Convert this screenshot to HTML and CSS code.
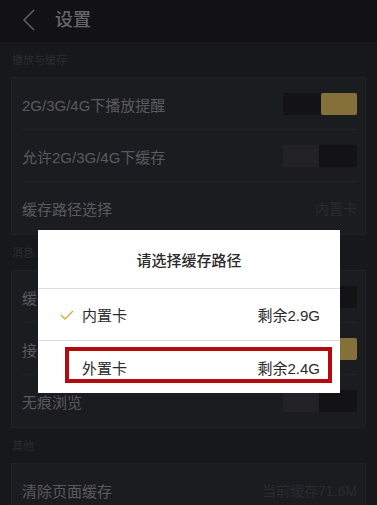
FILE: index.html
```html
<!DOCTYPE html>
<html lang="zh-CN">
<head>
<meta charset="UTF-8">
<meta name="viewport" content="width=device-width, initial-scale=1.0">
<title>设置</title>
<link rel="stylesheet" href="styles.css">
</head>
<body>
  <div class="topbar">
    <svg class="back-icon" viewBox="0 0 14 22" fill="none">
      <polyline points="12,1 2,11 12,21" stroke="#5e5e62" stroke-width="1.6" fill="none"/>
    </svg>
    <span class="topbar-title">设置</span>
  </div>
  <div class="page">
    <div class="section-label">播放与缓存</div>
    <div class="card">
      <div class="row">
        <span class="row-text">2G/3G/4G下播放提醒</span>
        <span class="toggle on"><span class="toggle-off"></span><span class="toggle-knob"></span></span>
      </div>
      <div class="row">
        <span class="row-text">允许2G/3G/4G下缓存</span>
        <span class="toggle off"><span class="toggle-knob"></span><span class="toggle-off"></span></span>
      </div>
      <div class="row">
        <span class="row-text">缓存路径选择</span>
        <span class="row-value">内置卡</span>
      </div>
    </div>
    <div class="section-label">消息</div>
    <div class="card">
      <div class="row">
        <span class="row-text">缓存提醒</span>
        <span class="toggle off"><span class="toggle-knob"></span><span class="toggle-off"></span></span>
      </div>
      <div class="row">
        <span class="row-text">接收推送</span>
        <span class="toggle on"><span class="toggle-off"></span><span class="toggle-knob"></span></span>
      </div>
      <div class="row">
        <span class="row-text">无痕浏览</span>
        <span class="toggle off"><span class="toggle-knob"></span><span class="toggle-off"></span></span>
      </div>
    </div>
    <div class="section-label">其他</div>
    <div class="card">
      <div class="row">
        <span class="row-text">清除页面缓存</span>
        <span class="row-value">当前缓存71.6M</span>
      </div>
    </div>
  </div>

  <!-- path chooser dialog -->
  <div class="dialog">
    <div class="dialog-title">请选择缓存路径</div>
    <div class="dialog-item">
      <svg class="check-icon" viewBox="0 0 14 10" fill="none">
        <polyline points="1,5 5,9 13,1" stroke="#d9a93f" stroke-width="1.4" fill="none"/>
      </svg>
      <span class="item-name">内置卡</span>
      <span class="item-free">剩余2.9G</span>
    </div>
    <div class="dialog-item">
      <span class="item-name">外置卡</span>
      <span class="item-free">剩余2.4G</span>
      <div class="highlight-box"></div>
    </div>
  </div>
</body>
</html>
```

FILE: styles.css
```css
html, body {
  margin: 0;
  padding: 0;
  background: #17181b;
  font-family: 'Liberation Sans', 'Noto Sans CJK SC', sans-serif;
  width: 377px;
  height: 505px;
  overflow: hidden;
  position: relative;
}
.topbar {
  height: 42px;
  background: #121215;
  display: flex;
  align-items: center;
  padding-left: 22px;
  box-sizing: border-box;
}
.back-icon {
  width: 14px;
  height: 22px;
  margin-top: -2px;
}
.topbar-title {
  margin-left: 19px;
  font-size: 18px;
  font-weight: 500;
  color: #66666a;
  margin-top: -6px;
}
.page {
  padding: 0 11px;
}
.section-label {
  height: 35px;
  line-height: 36px;
  font-size: 11px;
  color: #2c2d31;
  padding-left: 1px;
}
.card {
  background: #1b1c20;
  border: 1px solid #202125;
  padding: 0 8px 0 10px;
}
.row {
  height: 52px;
  display: flex;
  align-items: center;
  justify-content: space-between;
  border-bottom: 1px solid #202125;
  box-sizing: border-box;
}
.row:last-child {
  border-bottom: none;
}
.row-text {
  font-size: 15px;
  color: #5a5a5e;
  margin-top: 1px;
}
.row-value {
  font-size: 14px;
  color: #2a2b2f;
}
.toggle {
  width: 74px;
  height: 22px;
  display: flex;
}
.toggle-off {
  flex: 1;
  background: #131316;
}
.toggle-knob {
  width: 36px;
  border-radius: 2px;
}
.toggle.on .toggle-knob {
  background: #86703a;
}
.toggle.off .toggle-knob {
  background: #222226;
}
.dialog {
  position: absolute;
  top: 230px;
  left: 38px;
  width: 302px;
  background: #ffffff;
}
.dialog-title {
  height: 59px;
  display: flex;
  align-items: center;
  justify-content: center;
  font-size: 15px;
  font-weight: 500;
  color: #2a2a2a;
  border-bottom: 1px solid #dcdcdc;
  box-sizing: border-box;
}
.dialog-item {
  position: relative;
  height: 51px;
  display: flex;
  align-items: center;
  padding: 0 20px 0 44px;
  font-size: 15px;
  color: #2a2a2a;
}
.dialog-item + .dialog-item {
  border-top: 1px solid #dcdcdc;
  height: 52px;
}
.check-icon {
  position: absolute;
  left: 22px;
  top: 21px;
  width: 14px;
  height: 10px;
}
.item-name {
  flex: 1;
}
.highlight-box {
  position: absolute;
  left: 27px;
  top: 6px;
  width: 267px;
  height: 36px;
  border: 4px solid #b5090b;
  box-sizing: border-box;
}
```
